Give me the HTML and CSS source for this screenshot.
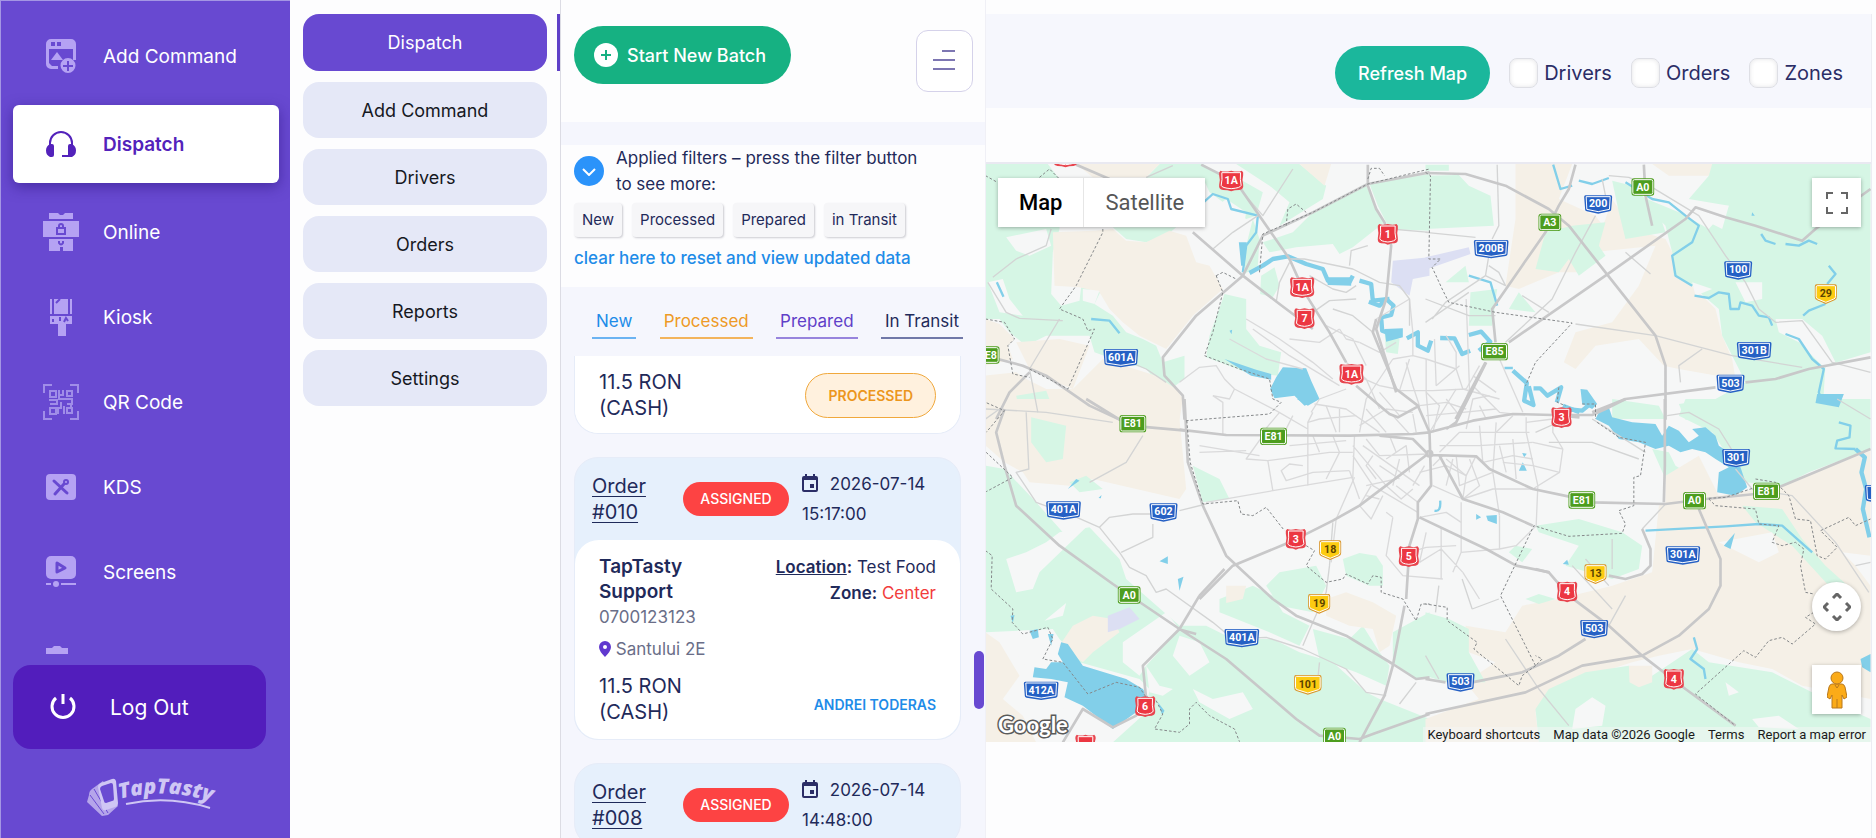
FILE: index.html
```html
<!DOCTYPE html>
<html lang="en">
  <head>
    <meta charset="UTF-8" />
    <meta name="viewport" content="width=device-width, initial-scale=1" />
    <title>TapTasty - Dispatch</title>
    <link rel="stylesheet" href="styles.css">
  </head>

  <body>
    <div class="app">
      <!-- Main sidebar -->
      <aside class="sidebar">
        <nav class="main-nav">
          <a class="nav-item" href="#">
            <svg class="nav-icon" viewBox="0 0 36 36">
              <path fill-rule="evenodd" d="M8 1h20a5 5 0 0 1 5 5v16h-3V11H6v14l3 3h6v3H8a5 5 0 0 1-5-5V6a5 5 0 0 1 5-5zM8 4v4h4V4zM14 4v4h4V4z" />
              <path d="M8 22l6-8 6 8z" />
              <path fill-rule="evenodd" d="M25 20a7 7 0 1 1 0 15 7 7 0 0 1 0-15zM24 23v4h-4v2h4v4h2v-4h4v-2h-4v-4z" />
            </svg>
            Add Command
          </a>
          <a class="nav-item active" href="#">
            <svg class="nav-icon" viewBox="0 0 36 36">
              <path d="M7 20v-3a11 11 0 0 1 22 0v3" fill="none" stroke="currentColor" stroke-width="2" />
              <path d="M7 18h2q2 0 2 2v9q0 2-2 2H7q-4-2-4-6.500T7 18zM29 18h-2q-2 0-2 2v9h-6v2h10q4-2 4-6.500T29 18z" />
            </svg>
            Dispatch
          </a>
          <a class="nav-item" href="#">
            <svg class="nav-icon" viewBox="0 0 36 38">
              <path d="M6 0h9l2 2h3l2-2h8v6H6zM6 26h24v12H20v-4h-3v4H6z" />
              <path d="M0 8h36v16H0z" />
              <path class="cut" d="M16 15v-2a2 2 0 0 1 4 0v2M14 15h8v6h-8z" />
              <path class="cut" d="M16 28v2q2 3 4 0v-2" />
            </svg>
            Online
          </a>
          <a class="nav-item" href="#">
            <svg class="nav-icon" viewBox="0 0 36 38">
              <path d="M7 1h22v15H7zM7 18h22v8h-6v12h-8V26H7z" />
              <path class="cut" d="M10 1v15M26 1v15M13 5l4-4M10 21v3M17 19v4M21 24l2-4 2 3" />
            </svg>
            Kiosk
          </a>
          <a class="nav-item" href="#">
            <svg class="nav-icon line" viewBox="0 0 36 36">
              <path d="M1 9V1h8M27 1h8v8M35 27v8h-8M9 35H1v-8" />
              <path d="M7 7h6v6H7zM24 7h5v5h-5zM7 24h6v6H7zM24 24h5v5h-5zM16 6v4M20 6v5h-4v4h4M6 16h8v4H7M18 18v6h-3v6M20 15h9v5h-5M21 22v8M28 20v3" />
            </svg>
            QR Code
          </a>
          <a class="nav-item" href="#">
            <svg class="nav-icon" viewBox="0 0 36 36">
              <rect x="3" y="5" width="30" height="26" rx="4" />
              <path class="tool" d="M11 12l13 12M12 25l9-10" />
              <circle class="cut" cx="23" cy="13" r="2" />
            </svg>
            KDS
          </a>
          <a class="nav-item" href="#">
            <svg class="nav-icon" viewBox="0 0 36 36">
              <rect x="3" y="2" width="30" height="23" rx="5" />
              <path class="tool" d="M14 9v9l8-4z" />
              <path d="M3 29h5v2H3zM18 29h15v2H18z" />
              <circle cx="13" cy="30" r="3" />
            </svg>
            Screens
          </a>
          <a class="nav-item" href="#" aria-label="More">
            <svg class="nav-icon" viewBox="0 0 36 36">
              <path d="M3 9h6l2-2h6l2 2h6v25H3z" />
            </svg>
          </a>
        </nav>

        <button class="logout" type="button">
          <svg viewBox="0 0 30 30">
            <path d="M8 6a11 11 0 1 0 14 0M15 2v10" />
          </svg>
          Log Out
        </button>

        <svg class="brand" viewBox="0 0 134 42" role="img">
          <path d="M17 6L6 14q-3 2-3 6l-2 7 15 14 6-1 10-9z" fill="#b5a5ea" />
          <path d="M8 14l14 24M4 20l14 19" stroke="#6a4bd2" />
          <path d="M15 8l11-4q3-1 4 2l2 22q0 3-3 4l-9 3q-3 1-4-2L12 12q0-3 3-4z" fill="#cfc6f4" />
          <path d="M16 11l9-3q2 0 2 2l1 14q0 2-2 2l-6 2q-2 0-2-2l-4-12q0-2 2-3z" fill="#6a4bd2" />
          <path id="brand-arc" d="M34 24q48-13 98 5" fill="none" />
          <text class="brand-name"><textPath href="#brand-arc">TapTasty</textPath></text>
          <path d="M40 29q42-9 84 4" stroke="#cfc6f4" stroke-width="2" fill="none" />
        </svg>
      </aside>

      <!-- Dispatch sections -->
      <nav class="submenu">
        <a class="sub-item active" href="#">Dispatch</a>
        <a class="sub-item" href="#">Add Command</a>
        <a class="sub-item" href="#">Drivers</a>
        <a class="sub-item" href="#">Orders</a>
        <a class="sub-item" href="#">Reports</a>
        <a class="sub-item" href="#">Settings</a>
      </nav>

      <!-- Orders -->
      <main class="orders">
        <header class="orders-top">
          <button class="btn-batch" type="button">
            <svg viewBox="0 0 24 24">
              <circle cx="12" cy="12" r="12" fill="#fff" />
              <path d="M12 7v10M7 12h10" stroke="#16b182" stroke-width="2" />
            </svg>
            Start New Batch
          </button>
          <button class="btn-filter" type="button" aria-label="Filter orders">
            <svg viewBox="0 0 24 20">
              <path d="M9 1h13M0 10h22M0 19h22" />
            </svg>
          </button>
        </header>

        <section class="filters">
          <div class="filters-head">
            <button class="btn-expand" type="button" aria-label="Expand filters">
              <svg viewBox="0 0 14 8"><path d="M1 1l6 6 6-6" /></svg>
            </button>
            <p>Applied filters – press the filter button to see more:</p>
          </div>
          <div class="tags">
            <span class="tag">New</span>
            <span class="tag">Processed</span>
            <span class="tag">Prepared</span>
            <span class="tag">in Transit</span>
          </div>
          <a class="reset" href="#">clear here to reset and view updated data</a>
        </section>

        <nav class="tabs">
          <a class="tab new" href="#">New</a>
          <a class="tab processed" href="#">Processed</a>
          <a class="tab prepared" href="#">Prepared</a>
          <a class="tab transit" href="#">In Transit</a>
        </nav>

        <div class="order-list">
          <article class="card cut-top">
            <div class="card-body short">
              <p class="price">11.5 RON<br />(CASH)</p>
              <span class="status-processed">PROCESSED</span>
            </div>
          </article>

          <article class="card">
            <div class="card-head">
              <a class="order-no" href="#">Order<br />#010</a>
              <span class="status-assigned">ASSIGNED</span>
              <p class="date">
                <svg viewBox="0 0 16 18"><path fill-rule="evenodd" d="M3 0h2v2h6V0h2v2h1q2 0 2 2v12q0 2-2 2H2q-2 0-2-2V4q0-2 2-2h1zM2 6v10h12V6zM8 10h4v4H8z" /></svg>
                2026-07-14<br />15:17:00
              </p>
            </div>
            <div class="card-body">
              <div class="customer">
                <h3>TapTasty<br />Support</h3>
                <p class="phone">0700123123</p>
                <p class="address">
                  <svg viewBox="0 0 12 16"><path fill-rule="evenodd" d="M6 0a6 6 0 0 1 6 6q0 4-6 10Q0 10 0 6a6 6 0 0 1 6-6zM6 4a2 2 0 1 0 0 4 2 2 0 0 0 0-4z" /></svg>
                  Santului 2E
                </p>
                <p class="price">11.5 RON<br />(CASH)</p>
              </div>
              <div class="delivery">
                <p><b><u>Location</u>:</b> Test Food</p>
                <p><b>Zone:</b> <span class="zone">Center</span></p>
                <a class="driver" href="#">ANDREI TODERAS</a>
              </div>
            </div>
          </article>

          <article class="card">
            <div class="card-head">
              <a class="order-no" href="#">Order<br />#008</a>
              <span class="status-assigned">ASSIGNED</span>
              <p class="date">
                <svg viewBox="0 0 16 18"><path fill-rule="evenodd" d="M3 0h2v2h6V0h2v2h1q2 0 2 2v12q0 2-2 2H2q-2 0-2-2V4q0-2 2-2h1zM2 6v10h12V6zM8 10h4v4H8z" /></svg>
                2026-07-14<br />14:48:00
              </p>
            </div>
          </article>
        </div>
        <span class="scroll-thumb"></span>
      </main>

      <!-- Map -->
      <section class="map-panel">
        <header class="map-bar">
          <button class="btn-refresh" type="button">Refresh Map</button>
          <label class="check"><input type="checkbox" />Drivers</label>
          <label class="check"><input type="checkbox" />Orders</label>
          <label class="check"><input type="checkbox" />Zones</label>
        </header>

        <div class="map">
          <svg class="map-canvas" viewBox="0 0 2658 1734" preserveAspectRatio="xMidYMid slice">
            <defs>
              <g id="red"><path d="M-26-30q10 5 26 0 16 5 26 0 6 4 4 14-4 14 0 28 2 14-10 16-12 0-20 4-8-4-20-4-12-2-10-16 4-14 0-28-2-10 4-14z" fill="#e8454e" /><path d="M-22-24h44q-2 22 2 38-2 8-24 10-22-2-24-10 4-16 2-38z" fill="#ec3742" stroke="#fff" stroke-width="3" /></g>
              <g id="red-wide"><path d="M-32-30q12 5 32 0 20 5 32 0 6 4 4 14-4 14 0 28 2 14-12 16-14 0-24 4-10-4-24-4-14-2-12-16 4-14 0-28-2-10 4-14z" fill="#e8454e" /><path d="M-28-24h56q-2 22 2 38-2 8-30 10-28-2-30-10 4-16 2-38z" fill="#ec3742" stroke="#fff" stroke-width="3" /></g>
              <g id="blue"><path d="M-38-27h76q4 0 4 5l-3 38q0 4-5 5l-34 7-34-7q-5-1-5-5l-3-38q0-5 4-5z" fill="#2560c4" /><path d="M-36-23h72l-2 38-34 7-34-7z" fill="#2560c4" stroke="#fff" stroke-width="3" /></g>
              <g id="blue-wide"><path d="M-48-27h96q4 0 4 5l-3 38q0 4-5 5l-44 7-44-7q-5-1-5-5l-3-38q0-5 4-5z" fill="#2560c4" /><path d="M-46-23h92l-2 38-44 7-44-7z" fill="#2560c4" stroke="#fff" stroke-width="3" /></g>
              <g id="green"><rect x="-40" y="-26" width="80" height="52" rx="8" fill="#4d9d1e" /><rect x="-36" y="-22" width="72" height="44" rx="5" fill="#4d9d1e" stroke="#fff" stroke-width="3" /></g>
              <g id="green-sm"><rect x="-34" y="-26" width="68" height="52" rx="8" fill="#4d9d1e" /><rect x="-30" y="-22" width="60" height="44" rx="5" fill="#4d9d1e" stroke="#fff" stroke-width="3" /></g>
              <g id="yellow"><path d="M-28-29h56q5 0 5 6v32q0 8-7 10L0 30l-26-11q-7-2-7-10v-32q0-6 5-6z" fill="#d9962b" /><path d="M-26-25h52q3 0 3 4v29q0 5-5 7L0 25l-24-10q-5-2-5-7v-29q0-4 3-4z" fill="#fccb12" stroke="#fff" stroke-width="3" /></g>
              <g id="yellow-wide"><path d="M-36-29h72q5 0 5 6v32q0 8-7 10L0 30l-34-11q-7-2-7-10v-32q0-6 5-6z" fill="#d9962b" /><path d="M-34-25h68q3 0 3 4v29q0 5-5 7L0 25l-32-10q-5-2-5-7v-29q0-4 3-4z" fill="#fccb12" stroke="#fff" stroke-width="3" /></g>
            </defs>

            <rect width="2658" height="1734" fill="#f6f7f7" />

            <!-- land, north west sheet -->
            <g transform="translate(-18 -495)">
              <path class="green" d="M18 495H205L240 540V690L220 760L215 885L245 920L300 905L305 865L368 868L345 915L400 950L440 1000L490 1020L530 1040L550 1090L615 1070V1140L560 1180L500 1110L400 1080L345 1060L330 1010L200 1010L140 1040L90 1000L60 960L18 960ZM540 495H670L740 540H780L850 580L830 650L800 660L690 580L670 536H500ZM400 685H590L560 710L500 730L440 720ZM770 495H960L1040 560L1030 600L900 680L930 610L870 560ZM940 700L1000 640L1160 560L1190 620L1215 670L1120 745L1080 765L1060 735L950 745L870 760L850 730ZM1170 555L1350 525V695L1230 690L1195 620ZM735 885L800 900V990L840 1040L905 1060L895 1130L800 1120L680 1075L690 1010ZM845 830L885 805L900 860L880 895L842 885ZM820 660L840 720L835 800L795 825L800 740Z" />
              <path class="sand" d="M220 700L345 695L400 690L440 725L500 730L570 695L620 710L650 790L690 800L730 870L640 950L560 1050L480 1010L430 970L390 930L360 880L300 865L225 860ZM290 495H540L500 535H340ZM960 495H1055L1035 560ZM18 960L60 975L105 1020L85 1040L100 1080L18 1100ZM110 1030L240 1020L330 1040L280 1170L230 1150L150 1110ZM280 1170L370 1080L530 1130L590 1170L610 1200L600 1262H18V1130L110 1120L140 1140L200 1170Z" />
              <path class="green" d="M110 1190L200 1175L225 1240L120 1235ZM1215 1000L1260 1020L1255 1065L1220 1060Z" />
              <path class="town" d="M80 715L200 690L215 740L150 770L110 755ZM25 850L70 840L90 900L130 950L60 940ZM310 870L360 875L345 915L310 905ZM740 600L800 640L790 700L710 740L660 680L690 640Z" />
              <path class="lilac" d="M1240 785L1350 775V830L1300 840L1290 890L1235 850Z" />
            </g>
            <!-- land, north east sheet -->
            <g transform="translate(1320 -495)">
              <path class="sand" d="M270 495H440L400 600L510 650L540 690L430 760L470 820L400 820L280 870L240 860L270 660ZM560 600L620 690L720 720L740 760L745 820L800 860L870 930L890 1010L920 1080L930 1140L760 1110L715 1100L640 1020L510 1040L450 1110L415 1090L450 1000L560 970L640 860L690 740L500 760L540 660ZM680 495H870L850 530H730Z" />
              <path class="green" d="M860 495H1335V1060L1200 1100L1250 1160L1230 1262H780L760 1215L870 1200L960 1150L930 1090L890 1010L880 930L800 860L745 830L740 760L720 680L600 560L640 590L760 640L850 690L910 620L790 600L850 530ZM0 530L100 528L130 560L195 590L205 680L0 690ZM0 497H70V515H0ZM440 680L540 670L520 740L540 770L460 830L430 780L400 820L330 810L360 700ZM560 545L620 560L700 640L720 700L600 720L580 640ZM280 880L330 940L250 930ZM135 880L215 870L200 980H130ZM60 850L120 800L130 850Z" />
              <path class="town" d="M800 850L860 870L810 890ZM930 850L1010 850V900L960 910ZM820 620H910L890 690L830 660ZM1050 960L1130 960L1190 1010L1230 1090L1190 1100L1120 1030L1060 1000ZM1200 1095H1335V1150L1250 1130L1290 1180L1250 1260H1190Z" />
              <path class="lilac" d="M0 775L130 745L135 765L0 812Z" />
            </g>
            <!-- land, south west sheet -->
            <g transform="translate(-18 705)">
              <path class="sand" d="M18 0H600V60L620 270L600 300L340 240L270 260L150 250L130 220L75 190L18 140Z" />
              <path class="green" d="M18 200L75 210L170 310L250 400L330 385L420 480L440 540L600 680L680 680L760 720L880 720L960 760L1060 790L1160 880L1200 900L1350 960V1030H400L500 940L510 870L480 840L300 790L240 720L220 690L18 700ZM155 55L260 80L250 180L200 190L155 130ZM270 250L320 230L370 270L300 280ZM640 200L720 240L750 300L670 310ZM720 600L820 560L880 590L910 640L990 680L960 740L870 700L720 640ZM860 560L900 520L1010 500L1040 560L1000 640L900 620ZM1090 480L1140 462L1190 470L1210 500V560L1170 560L1100 530ZM1020 780L1000 690L1110 720L1150 680L1200 760L1230 800L1220 860L1130 820ZM1240 700L1350 640V840L1310 840L1240 790Z" />
              <path class="sand" d="M240 740L280 680L340 650L400 660L420 700L340 760L310 790ZM18 700L60 730L120 830L70 900L130 950L170 1030H18ZM740 560H800L790 600L740 612ZM1040 600L1100 580L1180 610L1250 650L1230 740L1200 760L1180 690L1110 680L1040 650Z" />
              <path class="town" d="M80 480L140 460L200 430L240 400L320 385L180 520L160 570L110 580ZM195 665L260 612L250 650ZM430 730L560 640L600 690L500 800L480 830L430 790ZM600 710L660 730L690 790L630 830L580 770ZM500 800L540 860L580 870L550 890L510 880ZM640 870L700 900L790 880L820 930L750 960L660 910ZM110 740L190 730L210 790L160 810L120 790ZM240 930L310 920L390 980L350 1030H240ZM1240 850L1310 840L1350 860V940L1260 910Z" />
              <path class="lilac" d="M385 650L450 625L480 660L420 690L385 700Z" />
            </g>
            <!-- land, south east sheet -->
            <g transform="translate(1320 705)">
              <path class="green" d="M780 0H1335V150L1150 220L1070 260L960 250L900 160L860 100L760 50ZM560 0L700 20L720 60L560 60ZM680 150L730 160L750 200L850 260L800 290L720 240Z" />
              <path class="sand" d="M720 230L820 170L880 290L1000 270L1070 260L1335 155V900L1130 860L1040 810L940 790L800 750L700 770L620 790L400 860L330 940L340 1030H0V960L160 900L120 850L210 790L130 760L120 680L240 700L290 620L400 600L560 560L680 520L700 320L720 310Z" />
              <path class="green" d="M370 870L480 820L610 800L680 830L800 750L850 790L1040 820L1200 900L1335 960V1030H340L330 930ZM0 640L70 660L130 690V760L180 850L60 850L0 830ZM330 380L460 360L590 400L650 440L640 510L560 540L420 500L460 440L340 400ZM270 440L320 450L290 490L250 460ZM300 600L340 585L390 600L340 615ZM950 320L1070 330L1130 420L1200 500L1300 590L1210 560L1100 440L990 370Z" />
              <path class="sand" d="M610 800H680V850L640 865L612 850Z" />
              <path class="town" d="M450 930L500 895L540 920L530 980L440 990ZM880 430L1040 400L1060 460L1000 490ZM1250 460L1335 470V560L1290 500ZM900 850L940 880L910 890ZM980 960L1060 950L1120 990L1000 985Z" />
            </g>

            <!-- water -->
            <g transform="translate(-18 -495)">
              <path class="river" d="M672 610L700 585L745 600L755 630L835 650L830 700L800 740L790 820" />
              <path class="river wide" d="M810 822L850 800L880 780L925 772L980 795L1030 810L1045 845L1110 850L1120 830M1140 845L1175 855L1180 905L1230 900" />
              <path class="river" d="M335 960L390 965L420 1003M52 850L72 893" />
              <path class="lake" d="M778 730H802L795 800H785ZM750 995L758 992L756 1006ZM1040 835L1115 835V860L1045 858Z" />
            </g>
            <g transform="translate(582 405)">
              <path class="lake" d="M310 205L380 208L395 245L420 300L375 320L345 290L285 298L272 270L290 235ZM615 90L670 88V115L620 128ZM135 180L230 212L275 225V242L215 230ZM1018 515L1030 490L1042 515ZM1028 462L1042 464L1034 475ZM890 645L905 655L890 662ZM920 650L952 648V675L925 665Z" />
              <path class="river wide" d="M568 8L600 20L620 0L642 20L635 48L605 55L608 95L635 105M682 118L715 100L715 140L745 155L755 125M782 117L825 118L848 165L872 155M868 108L905 98L932 128L898 155M1000 215L1042 252L1034 305L1062 318L1048 262M1062 268L1082 268L1104 290L1145 265L1132 310M1150 320L1200 340" />
              <path class="river" d="M975 207H1000M765 635Q785 640 782 605" />
            </g>
            <g transform="translate(1320 -495)">
              <path class="river" d="M383 497L405 570L440 560M460 545L500 555L550 537M600 550L680 600L730 610L780 650L820 680L800 730L740 770L750 830L800 860M807 890L850 897L880 880L910 885L915 930L940 930L945 910L980 920L1000 950L1030 955L1040 980M1133 950L1150 935L1200 915M1210 800L1230 825L1205 855M1080 1005L1120 1020L1160 1080L1195 1110L1180 1180L1190 1210M1007 705L1020 725L1050 735M1080 735L1120 740L1150 725L1175 735M130 830L195 850L215 920" />
              <path class="lake" d="M1175 1185L1255 1185L1240 1225L1170 1212ZM465 1170L485 1172L515 1215L500 1230L470 1215ZM980 640L988 650H978Z" />
            </g>
            <g transform="translate(-18 705)">
              <path class="lake" d="M245 730L265 735L310 800L440 840L490 870L510 900L470 940L400 990L310 920L255 895L265 850L215 840L160 835L165 805L200 810L215 790L250 790L235 765ZM265 270L290 240L300 245ZM540 487L565 472V495ZM595 540L612 533L600 575ZM150 695L175 690L178 715L160 720ZM205 705L222 705L215 740ZM93 650L105 648L100 672ZM952 0H1020L985 20ZM535 910L555 935L548 948ZM357 297L366 288L364 298Z" />
            </g>
            <g transform="translate(1320 705)">
              <path class="lake" d="M510 60L520 40L550 25L560 55L620 70L690 75L710 110L730 80L760 95L790 130L820 110L800 90L840 85L870 110L880 140L910 160L920 200L945 205L965 265L930 290L875 280L880 220L910 205L870 180L840 160L800 150L765 160L730 140L690 150L640 130L580 120L550 80ZM895 440L928 402L915 450ZM412 495L425 482L430 497ZM1305 780L1335 765V820L1310 805Z" />
              <path class="river wide" d="M1290 150L1318 175L1308 220L1322 270L1312 330L1332 415M420 30L470 35L500 10" />
              <path class="river" d="M660 395L900 382L1000 375L1070 380L1160 460M805 715L815 750L795 780L835 810L840 840M1240 70L1275 80L1272 115L1235 125L1230 148L1290 150" />
            </g>

            <!-- city streets -->
            <g class="street" transform="translate(582 405)">
              <path d="M400 340L385 370V560M405 315L500 330L600 400M500 270L420 300L395 340M130 405V310L100 290M0 250L60 205L110 200L135 240L165 270L290 335L385 390M165 270L150 300L100 290M250 410L200 480L265 485L280 575L520 535L525 410M265 485L450 460H520M400 520L510 515M370 500L330 495L305 515L320 545L400 520M280 575L80 610M520 440L620 560L665 600L700 570M520 470L580 560L715 640M550 440L720 560M525 535L470 660L455 790" />
              <path d="M540 620L575 660L610 590M640 655L620 770L670 830L790 840M785 685V840M845 610V760L820 820M720 790L785 750L850 820M690 760L740 745L830 740M960 650V750L1010 740L1070 680L1075 560L1040 400V355M860 530L850 600L760 560M890 470L860 530L800 480M660 275H760L860 270M740 180V280L750 400M690 180L660 275M860 0L870 270L840 350M765 120L770 260M880 260L960 340L1000 345M930 150L960 180L1030 340M600 280L660 350M560 300L640 180M830 210L850 270L960 300" />
              <path d="M750 400L830 270M590 60L690 0L700 100M950 370L940 520M900 380L910 490M780 440H900L1060 430M780 460L840 400L1050 400M1120 360V400L1150 450L1140 520L1060 570M620 480L680 440L690 520M560 420L600 470L750 465M200 60L300 120L400 190L460 240M220 90L330 170L480 260M150 120L260 180L370 210M440 80L520 120L560 200M480 90L500 120L540 130M640 180L700 170L740 180L830 210M770 260L840 200M800 300L840 350M720 320L800 310L860 330" />
              <path d="M560 330L620 400M540 380L620 330L700 340M540 400L560 300M480 330V400M440 320L470 400M300 340L250 400M340 350L310 410M530 350L420 360L385 370M660 480L640 560M700 500L650 540L560 560M720 520L800 500L860 530M830 470L840 560L940 520M870 480L900 560L850 600M940 520L960 650M1060 570L940 570L850 600M1000 420L1010 540M1060 430L1150 450M960 440L980 520M600 500L660 540M720 655L800 640L845 670M650 560L715 610M850 820L900 900M845 760L960 750" />
              <path d="M760 400L780 320L740 280M860 390L880 300L930 290M920 360L900 320M620 640L640 655M575 560L540 620M510 515L540 600M800 560L820 480M910 490L1000 470L1060 480M460 410L480 460L440 540M400 410L420 460M330 120L420 130L480 90M540 130L600 160L650 130M700 170V100M830 210L830 160L800 110M60 440L240 470M60 460L200 455M330 440L500 425" />
              <path d="M500 190L560 240L600 330M510 220L600 260L650 270M680 190L700 260L720 320M740 350L850 340L950 330M700 345L710 400M640 350L690 405M580 470L560 500L590 540M630 410L650 460M900 200L860 270M880 230L950 280M1040 370L1120 360M950 400L1000 350M970 490L1060 500L1140 520M760 500L790 470M735 500L700 560M740 700L720 790M560 590L600 600" />
            </g>

            <!-- secondary roads -->
            <g class="road-sm" transform="translate(-18 -495)">
              <path d="M215 690L200 740L110 780L40 835M25 850L80 940L120 958L250 965M240 960L150 1110L175 1240M430 1080L500 1110L560 1150M930 780L975 780L1120 810L1200 850L1260 860L1290 900V980M1165 740L1115 755L1110 800M930 790L900 850L890 910M700 750L760 700L835 650M500 535L580 500M1235 690L1350 700M790 580L850 650L940 510M60 1230L18 1260" />
              <path d="M1000 940L1050 905L1130 900M1060 930L1120 950L1180 1000M990 830L1060 870L1100 880L1130 860" />
            </g>
            <g class="road-sm" transform="translate(1320 -495)">
              <path d="M215 497L220 680L200 720M510 650L450 760L380 900L240 1030M680 565L820 650L900 770L960 850L1000 930L1050 970L1130 965L1220 1090L1335 1120M0 700L150 715M450 975L690 1010L920 1070L1130 1105M290 890L370 940M600 760L675 825M190 770L180 830L240 860L220 820L190 800M180 830L60 910L20 960M530 540L540 590M550 530L610 535L680 565M0 970L130 880M0 900L130 950H210M830 1050L760 1100L765 1150" />
            </g>
            <g class="road-sm" transform="translate(-18 705)">
              <path d="M18 30L200 40L400 70M140 40L148 210L110 220L170 310L280 350L360 385L420 460L450 505L500 530L530 580L560 570L700 670L760 720L860 715L970 750L1100 810L1160 880L1220 890M360 385L390 355L460 345L520 345M600 335L680 315M520 375V415L425 460M1060 370L1050 500L1040 580L1000 670L970 740M1020 790L1015 840M330 250L440 190L490 110M1260 915L1310 850" />
            </g>
            <g class="road-sm" transform="translate(1320 705)">
              <path d="M240 720L340 870L430 980M930 210L980 270L1100 290L1230 430L1330 580M725 50L790 40L880 90L930 170M370 130L500 130L640 180M330 100L420 60M500 60L660 160M720 315L650 390M550 560L480 480M600 590L550 680M560 420L560 510M440 500L560 630M30 640L40 560M0 770L40 840M1290 500L1335 490M140 630L110 540M140 630L220 600M1235 0L1335 60" />
            </g>

            <!-- main roads -->
            <g class="road" transform="translate(-18 -495)">
              <path d="M665 497L770 550L930 780L975 880L1050 1000L1100 1090M1165 497V560L1190 630L1215 670L1235 740L1220 900L1190 990L1250 1180M640 700L790 830L900 915L1000 990M850 710L1000 640L1165 555L1350 520M850 710L790 830L720 890L650 950L550 1075L555 1130L610 1190L615 1262M18 1070L130 1100L200 1130L330 1220L420 1262M150 1120L90 1180L50 1260M290 497L390 540" />
            </g>
            <g class="road" transform="translate(1320 -495)">
              <path d="M0 522L120 525L240 560L370 630L430 680L540 820L690 1010L720 1100V1262M450 497L430 570L400 620L360 700L290 800L200 930L210 1030M250 1030L540 830L780 660L810 625L900 655L990 680L1130 725L1170 690L1335 570M655 497L660 590L680 680M180 1090L90 1260M500 1240L600 1200L870 1165M960 1150L1050 1140L1150 1110L1335 1075" />
            </g>
            <g class="road" transform="translate(582 405)">
              <path d="M0 392L140 408L510 410L700 405L750 400L880 365L1000 345L1120 348L1200 355M745 465L700 420L600 410M755 468L890 472L930 510L1060 570L1180 595M530 260L630 345L655 355L720 320M590 60L580 100L650 270L715 320L750 400L755 560L715 610V660L690 740L680 900M920 190L830 370L800 390M745 465L540 620L460 665L330 730L160 800L60 900M720 655L920 750L1010 800L1110 820M780 470L850 600L970 640L1060 680" />
              <circle cx="750" cy="464" r="8" />
            </g>
            <g class="road" transform="translate(-18 705)">
              <path d="M320 0L450 80L620 95M615 0L625 190L670 320L740 470L880 600L950 650L1100 710L1240 795L1310 840L1350 835M75 30L50 100L75 200L110 320L240 440L400 555L600 690L740 780L950 960L1020 1010L1140 1020L1180 1005L1350 945M660 590L600 690L490 800L500 900L470 950L400 985L310 930L250 1030M660 590L735 510M1275 620L1240 800L1215 890L1140 1030M595 690L650 705" />
            </g>
            <g class="road" transform="translate(1320 705)">
              <path d="M718 0V200L715 310M400 48H500L540 30L600 0M440 295L500 310L720 315L840 300L990 285M1060 265L1335 150M820 330L850 400L885 480V560L850 630L760 710L650 770L470 800L300 880L0 945M330 510L370 520L430 590L550 680L650 770L780 870L930 980M0 840L60 850M140 850L290 820L400 770L480 720M650 390L675 450V500L650 525L600 540L550 530" />
            </g>

            <!-- administrative limits -->
            <g class="limit">
              <path transform="translate(-18 -495)" d="M370 690V700L290 860L240 930L310 960L325 995L345 990L265 1170L150 1110M18 960L75 970L105 1020L85 1040L100 1125L150 1135M18 530L50 548M180 535L210 510L240 540M840 820L850 705L1000 640L1165 555L1350 510M710 830L730 820L770 840M710 830L730 880L700 1000L675 1070L780 1110L870 1140L880 1200L905 1210L870 1245L620 1265M920 680L925 630L950 615L980 640M1165 540L1175 508L1200 508L1215 530M18 1060V1210L75 1235L20 1300" />
              <path transform="translate(1320 -495)" d="M0 520L15 530L10 780H45L20 805L50 870L70 910L210 940L440 972L330 1090L300 1160M400 1165L395 1210L420 1220M470 1215H510V1260" />
              <path transform="translate(-18 705)" d="M622 65L632 190L670 315L775 305L785 345L820 350L860 325L915 395M980 440L1005 455L980 500L1040 550L1090 540L1100 525L1165 555L1180 530L1205 535V580L1270 600L1310 665L1325 615H1350M18 455L38 470L35 570L100 630L98 670L130 705L205 685L220 720L190 780L250 790L325 885L410 850L480 865L500 895M530 905L550 945L525 990L600 1000L630 975V930L650 910L690 950L765 990L780 1028M20 160L100 235L20 278" />
              <path transform="translate(1320 705)" d="M515 70L580 115L660 130L645 230L625 235V320L580 335L600 375L590 403L430 412L325 380L225 590L330 800L350 780L330 770M330 800L290 830L280 860L145 750L155 730L65 665V625L0 615M850 300L870 320L990 330L1000 375L1060 380L1040 430L1070 440L1110 430L1135 450L1125 500L1140 580L1165 585M850 298L900 295L990 265M990 240L1050 250L1090 290L1110 360L1155 365L1175 470L1200 480L1235 445L1185 395L1270 355L1290 380L1335 360M1165 640L1140 655L1170 675L1100 735L1070 715L1030 725L990 775L955 755L810 885L930 980" />
            </g>

            <!-- road numbers -->
            <g class="shield">
              <g transform="translate(240 -22)"><use href="#red-wide" /></g>
              <g transform="translate(300 1742)"><use href="#red" /></g>
              <g transform="translate(737 50)"><use href="#red-wide" /><text y="11">1A</text></g>
              <g transform="translate(1207 210)"><use href="#red" /><text y="11">1</text></g>
              <g transform="translate(950 370)"><use href="#red-wide" /><text y="11">1A</text></g>
              <g transform="translate(957 463)"><use href="#red" /><text y="11">7</text></g>
              <g transform="translate(1098 630)"><use href="#red-wide" /><text y="11">1A</text></g>
              <g transform="translate(1728 760)"><use href="#red" /><text y="11">3</text></g>
              <g transform="translate(931 1125)"><use href="#red" /><text y="11">3</text></g>
              <g transform="translate(1270 1177)"><use href="#red" /><text y="11">5</text></g>
              <g transform="translate(1745 1283)"><use href="#red" /><text y="11">4</text></g>
              <g transform="translate(2065 1545)"><use href="#red" /><text y="11">4</text></g>
              <g transform="translate(479 1627)"><use href="#red" /><text y="11">6</text></g>

              <g transform="translate(406 582)"><use href="#blue-wide" /><text y="9">601A</text></g>
              <g transform="translate(1517 255)"><use href="#blue-wide" /><text y="9">200B</text></g>
              <g transform="translate(1838 121)"><use href="#blue" /><text y="9">200</text></g>
              <g transform="translate(2258 319)"><use href="#blue" /><text y="9">100</text></g>
              <g transform="translate(2306 561)"><use href="#blue-wide" /><text y="9">301B</text></g>
              <g transform="translate(2235 659)"><use href="#blue" /><text y="9">503</text></g>
              <g transform="translate(234 1039)"><use href="#blue-wide" /><text y="9">401A</text></g>
              <g transform="translate(534 1045)"><use href="#blue" /><text y="9">602</text></g>
              <g transform="translate(769 1422)"><use href="#blue-wide" /><text y="9">401A</text></g>
              <g transform="translate(167 1580)"><use href="#blue-wide" /><text y="9">412A</text></g>
              <g transform="translate(2252 882)"><use href="#blue" /><text y="9">301</text></g>
              <g transform="translate(2092 1174)"><use href="#blue-wide" /><text y="9">301A</text></g>
              <g transform="translate(1826 1395)"><use href="#blue" /><text y="9">503</text></g>
              <g transform="translate(1425 1555)"><use href="#blue" /><text y="9">503</text></g>
              <g transform="translate(2680 990)"><use href="#blue" /></g>

              <g transform="translate(2 573)"><use href="#green" /><text x="14" y="11">E8</text></g>
              <g transform="translate(442 779)"><use href="#green" /><text y="11">E81</text></g>
              <g transform="translate(864 817)"><use href="#green" /><text y="11">E81</text></g>
              <g transform="translate(1693 175)"><use href="#green-sm" /><text y="11">A3</text></g>
              <g transform="translate(1972 69)"><use href="#green-sm" /><text y="11">A0</text></g>
              <g transform="translate(1527 563)"><use href="#green" /><text y="11">E85</text></g>
              <g transform="translate(1789 1008)"><use href="#green" /><text y="11">E81</text></g>
              <g transform="translate(2127 1010)"><use href="#green-sm" /><text y="11">A0</text></g>
              <g transform="translate(2343 982)"><use href="#green" /><text y="11">E81</text></g>
              <g transform="translate(431 1293)"><use href="#green-sm" /><text y="11">A0</text></g>
              <g transform="translate(1047 1717)"><use href="#green-sm" /><text y="11">A0</text></g>

              <g class="dark" transform="translate(2521 390)"><use href="#yellow" /><text y="9">29</text></g>
              <g class="dark" transform="translate(1034 1158)"><use href="#yellow" /><text y="9">18</text></g>
              <g class="dark" transform="translate(1001 1319)"><use href="#yellow" /><text y="9">19</text></g>
              <g class="dark" transform="translate(967 1562)"><use href="#yellow-wide" /><text y="9">101</text></g>
              <g class="dark" transform="translate(1830 1230)"><use href="#yellow" /><text y="9">13</text></g>
            </g>
          </svg>

          <div class="map-type">
            <button class="selected" type="button">Map</button>
            <button type="button">Satellite</button>
          </div>
          <button class="map-btn fullscreen" type="button" aria-label="Toggle fullscreen">
            <svg viewBox="0 0 22 22"><path d="M1 7V1h6M15 1h6v6M21 15v6h-6M7 21H1v-6" /></svg>
          </button>
          <div class="map-side">
            <button class="map-btn round" type="button" aria-label="Map camera controls">
              <svg viewBox="0 0 28 28"><path d="M10 5l4-4 4 4M23 10l4 4-4 4M18 23l-4 4-4-4M5 18l-4-4 4-4" /></svg>
            </button>
            <button class="map-btn" type="button" aria-label="Street View">
              <svg class="pegman" viewBox="0 0 20 38">
                <path d="M5 13q-2 0-3 3L0 26l3 2 2-4v13h10V24l2 4 3-2-2-10q-1-3-3-3z" />
                <circle cx="10" cy="7" r="6" />
                <path d="M10 28v9M8 14l2 3 2-3" />
              </svg>
            </button>
          </div>
          <svg class="google" viewBox="0 0 76 30"><text x="3" y="21">Google</text></svg>
          <div class="map-legal">
            <button type="button">Keyboard shortcuts</button>
            <span>Map data ©2026 Google</span>
            <a href="#">Terms</a>
            <a href="#">Report a map error</a>
          </div>
        </div>
      </section>
    </div>
  </body>
</html>
```

FILE: styles.css
```css
* {
  box-sizing: border-box;
}
body {
  margin: 0;
  font-family: Inter, "Open Sans", sans-serif;
  color: #1f2a5a;
  background-color: #fdfdfe;
}
p,
h3 {
  margin: 0;
}
a {
  color: inherit;
  text-decoration: none;
}
button {
  font-family: inherit;
  border: none;
  padding: 0;
  cursor: pointer;
}
.app {
  display: flex;
  height: 100vh;
  overflow: hidden;
}

/* Sidebar */
.sidebar {
  flex: none;
  width: 290px;
  display: flex;
  flex-direction: column;
  background-color: #6849d1;
  border-top: 1px solid #a496e4;
  border-left: 1px solid #a496e4;
}
.main-nav {
  flex: 1;
  min-height: 0;
  display: flex;
  flex-direction: column;
  gap: 7px;
  padding: 16px 11px 0 12px;
  overflow: hidden;
}
.nav-item {
  flex: none;
  height: 78px;
  display: flex;
  align-items: center;
  gap: 24px;
  padding-left: 30px;
  border-radius: 6px;
  color: #fff;
  font-size: 19px;
}
.nav-item.active {
  margin: 3px 0;
  background-color: #fff;
  color: #5322bb;
  font-weight: 600;
  box-shadow: 0 4px 14px rgba(40, 15, 120, 0.5);
}
.nav-icon {
  flex: none;
  width: 36px;
  height: 38px;
  fill: #b5a2f3;
}
.active .nav-icon {
  fill: currentColor;
}
.nav-icon .cut,
.nav-icon .tool {
  fill: none;
  stroke: #6849d1;
  stroke-width: 2;
}
.nav-icon .tool {
  stroke-width: 3;
  stroke-linecap: round;
  stroke-linejoin: round;
}
.nav-icon.line {
  fill: none;
  stroke: #a08de8;
  stroke-width: 2;
}
.logout {
  flex: none;
  height: 84px;
  margin: 11px 24px 26px 12px;
  padding-left: 35px;
  display: flex;
  align-items: center;
  gap: 32px;
  border-radius: 18px;
  background-color: #521dbc;
  color: #fff;
  font-size: 21px;
}
.logout svg {
  width: 30px;
  height: 30px;
  fill: none;
  stroke: #fff;
  stroke-width: 3;
}
.brand {
  flex: none;
  width: 134px;
  height: 42px;
  margin: 0 0 21px 85px;
}
.brand-name {
  font-family: "Open Sans", sans-serif;
  font-size: 21px;
  font-weight: 800;
  font-style: italic;
  fill: #cfc6f4;
}

/* Dispatch sections */
.submenu {
  flex: none;
  width: 271px;
  display: flex;
  flex-direction: column;
  gap: 11px;
  padding: 14px 13px;
  border-right: 1px solid #dcdce4;
}
.sub-item {
  position: relative;
  height: 56px;
  display: flex;
  align-items: center;
  justify-content: center;
  border-radius: 16px;
  background-color: #e5e8f7;
  color: #16181f;
  font-size: 18px;
}
.sub-item.active {
  height: 57px;
  background-color: #6849d1;
  color: #fff;
}
.sub-item.active::after {
  content: "";
  position: absolute;
  top: 0;
  right: -13px;
  width: 3px;
  height: 100%;
  background-color: #5f40c8;
}

/* Orders */
.orders {
  position: relative;
  flex: none;
  width: 425px;
  display: flex;
  flex-direction: column;
  background-color: #f5f6fd;
  border-right: 1px solid #f0f0f6;
}
.orders-top {
  flex: none;
  height: 122px;
  display: flex;
  justify-content: space-between;
  align-items: flex-start;
  padding: 26px 12px 0 13px;
  background-color: #fdfdfe;
}
.btn-batch {
  height: 58px;
  display: flex;
  align-items: center;
  gap: 9px;
  padding: 0 25px 0 20px;
  border-radius: 29px;
  background-color: #16b182;
  color: #fff;
  font-size: 18px;
  font-weight: 500;
}
.btn-batch svg {
  width: 24px;
  height: 24px;
}
.btn-filter {
  width: 57px;
  height: 62px;
  margin-top: 4px;
  border: 1px solid #d5d2ea;
  border-radius: 12px;
  background-color: #fff;
}
.btn-filter svg {
  width: 24px;
  height: 20px;
  stroke: #7d76b2;
  stroke-width: 2;
}
.filters {
  flex: none;
  height: 142px;
  margin-top: 23px;
  padding: 0 13px;
  background-color: #fdfdfe;
}
.filters-head {
  display: flex;
  align-items: center;
  gap: 12px;
  padding-right: 40px;
  font-size: 17px;
  line-height: 26px;
}
.btn-expand {
  flex: none;
  width: 30px;
  height: 30px;
  border-radius: 50%;
  background-color: #2b93fa;
}
.btn-expand svg {
  width: 14px;
  height: 8px;
  fill: none;
  stroke: #fff;
  stroke-width: 2;
}
.tags {
  display: flex;
  gap: 10px;
  margin: 6px 0 8px;
}
.tag {
  height: 34px;
  padding: 0 8px;
  border-radius: 4px;
  background-color: #f6f6f8;
  box-shadow: 1px 1px 2px rgba(60, 60, 80, 0.25);
  font-size: 15px;
  line-height: 33px;
}
.reset {
  color: #1e8ce8;
  font-size: 17px;
  font-weight: 500;
  line-height: 26px;
}
.tabs {
  flex: none;
  height: 69px;
  display: flex;
  justify-content: space-between;
  align-items: flex-start;
  padding: 18px 22px 0 31px;
}
.tab {
  padding: 0 4px;
  border-bottom: 2px solid;
  font-size: 17px;
  line-height: 32px;
}
.tab.new {
  color: #1e8ce8;
  border-color: #6bb3f2;
}
.tab.processed {
  color: #ee9a26;
  border-color: #f3b45c;
}
.tab.prepared {
  color: #5f40c8;
  border-color: #9784dd;
}
.tab.transit {
  border-color: #7078a8;
}
.order-list {
  flex: 1;
  min-height: 0;
  display: flex;
  flex-direction: column;
  gap: 23px;
  padding: 0 24px 0 13px;
  overflow: hidden;
}
.card {
  flex: none;
  border: 1px solid #e6ecf8;
  border-radius: 24px;
  background-color: #e6f0fc;
}
.card.cut-top {
  border-top: none;
  border-radius: 0 0 24px 24px;
  background-color: #fff;
}
.card-head {
  height: 82px;
  display: grid;
  grid-template-columns: 78px 106px 1fr;
  align-items: center;
  gap: 13px;
  padding-left: 17px;
}
.order-no {
  font-size: 20px;
  line-height: 26px;
  text-decoration: underline;
  text-decoration-thickness: 1px;
  text-underline-offset: 3px;
}
.status-assigned {
  height: 34px;
  border-radius: 17px;
  background-color: #fd4343;
  color: #fff;
  font-size: 14px;
  font-weight: 500;
  line-height: 34px;
  text-align: center;
}
.date {
  font-size: 17px;
  line-height: 30px;
}
.date svg {
  width: 16px;
  height: 18px;
  margin-right: 7px;
  vertical-align: -2px;
  fill: #2b2d66;
}
.card-body {
  display: flex;
  justify-content: space-between;
  padding: 14px 24px;
  border-radius: 24px;
  background-color: #fff;
}
.card-body.short {
  align-items: center;
  padding: 13px 24px 12px;
}
.price {
  font-size: 20px;
  line-height: 26px;
}
.status-processed {
  height: 45px;
  padding: 0 22px;
  border: 1px solid #f0a83c;
  border-radius: 23px;
  background-color: #fff1de;
  color: #ec961c;
  font-size: 14px;
  font-weight: 600;
  line-height: 43px;
}
.customer h3 {
  font-size: 19px;
  font-weight: 600;
  line-height: 25px;
}
.phone,
.address {
  color: #6a6e88;
  font-size: 17px;
  line-height: 26px;
}
.address {
  margin: 6px 0 11px;
}
.address svg {
  width: 12px;
  height: 16px;
  vertical-align: -2px;
  fill: #6038cf;
}
.delivery {
  display: flex;
  flex-direction: column;
  align-items: flex-end;
  font-size: 17px;
  line-height: 26px;
}
.delivery b {
  font-weight: 600;
}
.zone {
  color: #f23c3c;
}
.driver {
  margin: auto 0 7px;
  color: #1e8ce8;
  font-size: 14px;
  font-weight: 600;
}
.scroll-thumb {
  position: absolute;
  right: 1px;
  bottom: 129px;
  width: 10px;
  height: 58px;
  border-radius: 5px;
  background-color: #6849d1;
}

/* Map */
.map-panel {
  flex: 1;
  min-width: 0;
  margin: 14px 4px 0 0;
  border-right: 1px solid #ececf3;
}
.map-bar {
  height: 94px;
  display: flex;
  justify-content: flex-end;
  align-items: center;
  gap: 19px;
  padding: 24px 28px 0 0;
  background-color: #f6f7fd;
}
.btn-refresh {
  height: 54px;
  padding: 0 23px;
  border-radius: 27px;
  background-color: #1bb79c;
  color: #fff;
  font-size: 18px;
  font-weight: 500;
}
.check {
  display: flex;
  align-items: center;
  gap: 6px;
  color: #2b2d66;
  font-size: 20px;
}
.check input {
  appearance: none;
  width: 29px;
  height: 30px;
  margin: 0;
  border: 1px solid #dedfe5;
  border-radius: 8px;
  background-color: #fff;
  box-shadow: inset 0 0 4px rgba(60, 60, 80, 0.15);
}
.check input:checked {
  background-color: #6849d1;
}
.map {
  position: relative;
  height: 580px;
  margin-top: 54px;
  border-top: 2px solid #e9e9f1;
  overflow: hidden;
}
.map-canvas {
  display: block;
  width: 100%;
  height: 100%;
}
.green {
  fill: #d6f6e5;
}
.sand {
  fill: #f5f0e7;
}
.town {
  fill: #f6f7f7;
}
.lilac {
  fill: #dcdff3;
}
.lake {
  fill: #82cfe9;
}
.river {
  fill: none;
  stroke: #82cfe9;
  stroke-width: 7;
  stroke-linejoin: round;
}
.river.wide {
  stroke-width: 13;
}
.street,
.road-sm,
.road {
  fill: none;
  stroke: #dadadb;
  stroke-width: 4;
  stroke-linejoin: round;
}
.road-sm {
  stroke: #d3d4d4;
}
.road {
  stroke: #c8c8c9;
  stroke-width: 8;
}
.limit {
  fill: none;
  stroke: #85888a;
  stroke-width: 3;
  stroke-dasharray: 8 6;
}
.shield {
  fill: #fff;
  font-family: Roboto, sans-serif;
  font-size: 32px;
  font-weight: 700;
  text-anchor: middle;
}
.shield .dark {
  fill: #5a4300;
}

/* Map controls */
.map-type {
  position: absolute;
  top: 14px;
  left: 12px;
  display: flex;
  background-color: #fff;
  box-shadow: 0 1px 4px rgba(0, 0, 0, 0.3);
}
.map-type button {
  height: 49px;
  padding: 0 21px;
  background-color: #fff;
  color: #565656;
  font-family: Roboto, sans-serif;
  font-size: 22px;
}
.map-type .selected {
  border-right: 1px solid #e6e6e6;
  color: #000;
  font-weight: 500;
}
.map-btn {
  width: 49px;
  height: 49px;
  display: flex;
  align-items: center;
  justify-content: center;
  background-color: #fff;
  box-shadow: 0 1px 4px rgba(0, 0, 0, 0.3);
}
.map-btn svg {
  width: 22px;
  height: 22px;
  fill: none;
  stroke: #666;
  stroke-width: 2;
}
.map-btn.fullscreen {
  position: absolute;
  top: 14px;
  right: 10px;
}
.map-side {
  position: absolute;
  right: 10px;
  bottom: 28px;
  display: flex;
  flex-direction: column;
  gap: 34px;
}
.map-btn.round {
  border-radius: 50%;
}
.map-btn.round svg {
  width: 28px;
  height: 28px;
  stroke-width: 3;
}
.map-btn .pegman {
  width: 20px;
  height: 38px;
  fill: #fbab18;
  stroke: #b9781c;
  stroke-width: 1;
}
.google {
  position: absolute;
  left: 9px;
  bottom: 0;
  width: 76px;
  height: 30px;
}
.google text {
  font-family: Lato, sans-serif;
  font-size: 22px;
  font-weight: 700;
  fill: #fff;
  stroke: #5a5a5a;
  stroke-width: 3px;
  paint-order: stroke;
}
.map-legal {
  position: absolute;
  right: 0;
  bottom: 0;
  display: flex;
  gap: 13px;
  padding: 0 5px;
  background-color: rgba(245, 246, 246, 0.5);
  color: #1a1a1a;
  font-family: Roboto, sans-serif;
  font-size: 13px;
  line-height: 15px;
}
.map-legal button {
  background: none;
  color: inherit;
  font-size: 13px;
  line-height: 15px;
}
```
